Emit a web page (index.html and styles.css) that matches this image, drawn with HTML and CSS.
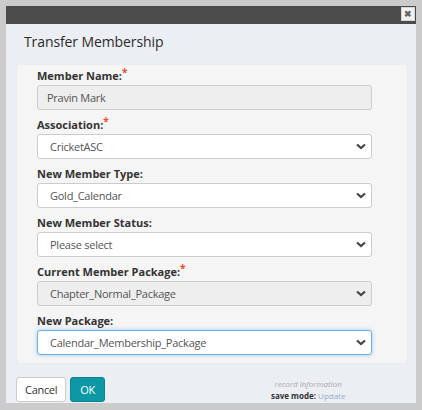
FILE: index.html
```html
<!DOCTYPE html>
<html>
<head>
	<title>Transfer Membership</title>
	<meta http-equiv="Content-Type" content="text/html; charset=UTF-8">
	<link rel="stylesheet" href="styles.css">
</head>
<body>
	<div id="dialog">
		<div id="dlg-header">
			<span id="dlg-close">&#10006;</span>
		</div>
		<div id="dlg-title">Transfer Membership</div>
		<div id="panel">
			<div class="field">
				<label class="field-label">Member Name:<span class="req">*</span></label>
				<div class="input disabled">Pravin Mark</div>
			</div>
			<div class="field">
				<label class="field-label">Association:<span class="req">*</span></label>
				<div class="select"><span>CricketASC</span><svg class="chev" width="10" height="7" viewBox="0 0 10 7"><path d="M1 1.5 L5 5 L9 1.5" fill="none" stroke="#444" stroke-width="2.2"/></svg></div>
			</div>
			<div class="field">
				<label class="field-label">New Member Type:</label>
				<div class="select"><span>Gold_Calendar</span><svg class="chev" width="10" height="7" viewBox="0 0 10 7"><path d="M1 1.5 L5 5 L9 1.5" fill="none" stroke="#444" stroke-width="2.2"/></svg></div>
			</div>
			<div class="field">
				<label class="field-label">New Member Status:</label>
				<div class="select"><span>Please select</span><svg class="chev" width="10" height="7" viewBox="0 0 10 7"><path d="M1 1.5 L5 5 L9 1.5" fill="none" stroke="#444" stroke-width="2.2"/></svg></div>
			</div>
			<div class="field">
				<label class="field-label">Current Member Package:<span class="req">*</span></label>
				<div class="select disabled"><span>Chapter_Normal_Package</span><svg class="chev" width="10" height="7" viewBox="0 0 10 7"><path d="M1 1.5 L5 5 L9 1.5" fill="none" stroke="#444" stroke-width="2.2"/></svg></div>
			</div>
			<div class="field">
				<label class="field-label">New Package:</label>
				<div class="select focused"><span>Calendar_Membership_Package</span><svg class="chev" width="10" height="7" viewBox="0 0 10 7"><path d="M1 1.5 L5 5 L9 1.5" fill="none" stroke="#444" stroke-width="2.2"/></svg></div>
			</div>
		</div>
		<div id="dlg-footer">
			<button class="btn btn-default">Cancel</button>
			<button class="btn btn-primary">OK</button>
			<div id="record-info">
				<div class="record-title">record information</div>
				<div class="save-mode"><b>save mode:</b> <span class="mode-value">Update</span></div>
			</div>
		</div>
	</div>
</body>
</html>
```

FILE: styles.css
```css
body {
	margin: 0;
	background: #cbcbcb;
	font-family: "Open Sans", "Noto Sans", sans-serif;
	color: #333;
}
#dialog {
	margin: 6px 0 0 6px;
	width: 410px;
	height: 397px;
	background: #ebeef3;
	display: flex;
	flex-direction: column;
}
#dlg-header {
	height: 21px;
	background: #4b4b4b;
	display: flex;
	justify-content: flex-end;
	align-items: flex-start;
}
#dlg-close {
	width: 14px;
	height: 14px;
	margin: 1px 1px 0 0;
	box-sizing: border-box;
	background: #f2f2f2;
	border: 1px solid #d6d6d6;
	color: #666;
	font-size: 9px;
	font-weight: bold;
	line-height: 12px;
	text-align: center;
}
#dlg-title {
	font-size: 14px;
	line-height: 20px;
	padding: 8px 0 0 18px;
	height: 29px;
	color: #2b2b2b;
	letter-spacing: -0.1px;
}
#panel {
	margin: 8px 8px 0 10px;
	height: 300px;
	box-sizing: border-box;
	background: #f5f5f5;
	border: 1px solid #e9ebee;
	border-radius: 4px;
	padding: 4px 35px 0 20px;
}
.field {
	margin-bottom: 8px;
}
.field-label {
	display: block;
	height: 14px;
	font-size: 11px;
	font-weight: bold;
	line-height: 14px;
	margin-bottom: 2px;
	color: #333;
}
.req {
	color: #f04e23;
	font-size: 10px;
	line-height: 10px;
	vertical-align: top;
	position: relative;
	top: -2px;
}
.input, .select {
	height: 25px;
	box-sizing: border-box;
	background: #fff;
	border: 1px solid #ccc;
	border-radius: 3px;
	font-size: 11px;
	letter-spacing: -0.25px;
	color: #555;
	display: flex;
	align-items: center;
}
.input {
	padding-left: 9px;
}
.select {
	padding: 0 5px 0 12px;
	justify-content: space-between;
}
.disabled {
	background: #eee;
}
.focused {
	border-color: #66afe9;
	box-shadow: 0 0 4px rgba(102, 175, 233, 0.6);
}
.chev {
	display: block;
}
#dlg-footer {
	display: flex;
	align-items: flex-start;
	padding: 13px 0 0 10px;
}
.btn {
	height: 25px;
	box-sizing: border-box;
	font-family: "Open Sans", "Noto Sans", sans-serif;
	font-size: 11px;
	letter-spacing: -0.3px;
	border-radius: 3px;
	padding: 0 8px;
	margin-right: 4px;
}
.btn-default {
	background: #fff;
	border: 1px solid #ccc;
	color: #333;
}
.btn-primary {
	background: #0e97a4;
	border: 1px solid #0b8390;
	color: #fff;
	padding: 0 9px;
}
#record-info {
	margin-left: 162px;
	text-align: center;
	padding-top: 1px;
}
.record-title {
	font-size: 8px;
	font-style: italic;
	color: #aaa;
	line-height: 11px;
}
.save-mode {
	font-size: 8px;
	line-height: 14px;
	color: #333;
}
.mode-value {
	color: #8fb1c9;
}
```
